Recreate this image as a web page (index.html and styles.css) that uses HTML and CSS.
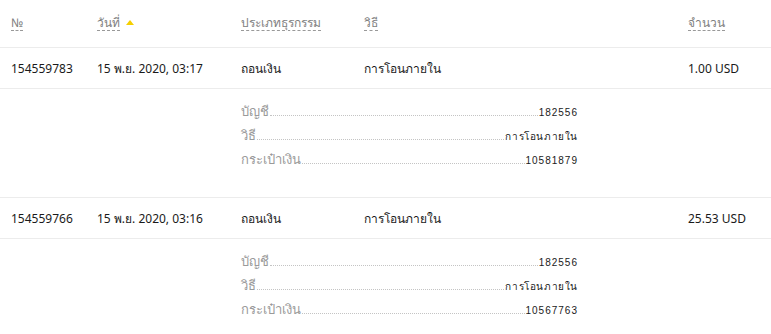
FILE: index.html
```html
<!DOCTYPE html>
<html lang="th">
<head>
<meta charset="utf-8">
<link rel="stylesheet" href="styles.css">
</head>
<body>
<div class="tx">
  <div class="grid head">
    <div><span class="h">№</span></div>
    <div><span class="h">วันที่</span><span class="sort"></span></div>
    <div><span class="h">ประเภทธุรกรรม</span></div>
    <div><span class="h">วิธี</span></div>
    <div><span class="h">จำนวน</span></div>
  </div>

  <div class="grid row">
    <div>154559783</div>
    <div>15 พ.ย. 2020, 03:17</div>
    <div>ถอนเงิน</div>
    <div>การโอนภายใน</div>
    <div>1.00 USD</div>
  </div>
  <div class="grid detail">
    <div class="dl">
      <div class="line"><span class="lbl">บัญชี</span><span class="dots"></span><span class="val">182556</span></div>
      <div class="line"><span class="lbl">วิธี</span><span class="dots"></span><span class="val th">การโอนภายใน</span></div>
      <div class="line"><span class="lbl">กระเป๋าเงิน</span><span class="dots"></span><span class="val">10581879</span></div>
    </div>
  </div>

  <div class="grid row">
    <div>154559766</div>
    <div>15 พ.ย. 2020, 03:16</div>
    <div>ถอนเงิน</div>
    <div>การโอนภายใน</div>
    <div>25.53 USD</div>
  </div>
  <div class="grid detail">
    <div class="dl">
      <div class="line"><span class="lbl">บัญชี</span><span class="dots"></span><span class="val">182556</span></div>
      <div class="line"><span class="lbl">วิธี</span><span class="dots"></span><span class="val th">การโอนภายใน</span></div>
      <div class="line"><span class="lbl">กระเป๋าเงิน</span><span class="dots"></span><span class="val">10567763</span></div>
    </div>
  </div>
</div>
</body>
</html>
```
FILE: styles.css
```css
html, body {
  margin: 0;
  padding: 0;
  background: #fff;
}
body {
  font-family: "Noto Sans", "Open Sans", sans-serif;
  font-size: 12px;
  color: #222;
}
.tx {
  width: 771px;
}
.grid {
  display: grid;
  grid-template-columns: 86px 144px 123px 324px 1fr;
  padding-left: 11px;
  align-items: center;
  border-bottom: 1px solid #ececec;
}
.head {
  height: 48px;
  padding-bottom: 2px;
  box-sizing: border-box;
}
.h {
  color: #808080;
  font-size: 12px;
  text-decoration: underline dashed #999;
  text-underline-offset: 3px;
}
.sort {
  display: inline-block;
  width: 0;
  height: 0;
  margin-left: 6px;
  vertical-align: 2px;
  border-left: 4px solid transparent;
  border-right: 4px solid transparent;
  border-bottom: 5px solid #f5cf00;
}
.row {
  height: 41px;
  box-sizing: border-box;
  color: #1a1a1a;
}
.detail {
  height: 109px;
  box-sizing: border-box;
  align-items: start;
}
.dl {
  grid-column: 3 / 5;
  width: 336px;
  padding-top: 12px;
  display: flex;
  flex-direction: column;
}
.line {
  display: flex;
  align-items: baseline;
  height: 24px;
}
.lbl {
  color: #9a9a9a;
  font-size: 13px;
}
.dots {
  flex: 1;
  border-bottom: 1px dotted #c4c4c4;
  margin: 0 1px;
}
.val {
  font-family: "Liberation Sans", sans-serif;
  font-size: 10px;
  letter-spacing: 1px;
  color: #1a1a1a;
  margin-right: -1px;
}
.val.th {
  font-family: "Noto Sans", sans-serif;
  font-size: 10px;
  letter-spacing: 0.6px;
}
```
